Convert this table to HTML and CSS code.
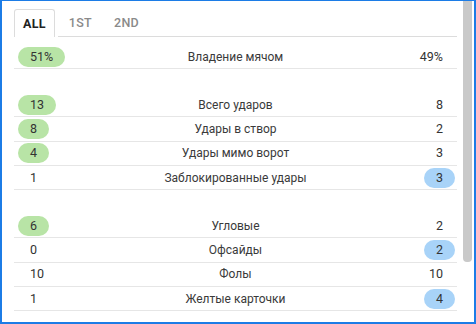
FILE: index.html
```html
<!DOCTYPE html>
<html lang="ru">
<head>
<meta charset="utf-8">
<link rel="stylesheet" href="styles.css">
</head>
<body>
<div class="frame">
  <div class="content">
    <div class="tabs">
      <div class="tab active">ALL</div>
      <div class="tab">1ST</div>
      <div class="tab">2ND</div>
      <div class="tab-line"></div>
    </div>
    <div class="group">
      <div class="row"><span class="val home pill green">51%</span><span class="label">Владение мячом</span><span class="val away">49%</span></div>
    </div>
    <div class="group">
      <div class="row"><span class="val home pill green">13</span><span class="label">Всего ударов</span><span class="val away">8</span></div>
      <div class="row"><span class="val home pill green">8</span><span class="label">Удары в створ</span><span class="val away">2</span></div>
      <div class="row"><span class="val home pill green">4</span><span class="label">Удары мимо ворот</span><span class="val away">3</span></div>
      <div class="row"><span class="val home">1</span><span class="label">Заблокированные удары</span><span class="val away pill blue">3</span></div>
    </div>
    <div class="group">
      <div class="row"><span class="val home pill green">6</span><span class="label">Угловые</span><span class="val away">2</span></div>
      <div class="row"><span class="val home">0</span><span class="label">Офсайды</span><span class="val away pill blue">2</span></div>
      <div class="row"><span class="val home">10</span><span class="label">Фолы</span><span class="val away">10</span></div>
      <div class="row"><span class="val home">1</span><span class="label">Желтые карточки</span><span class="val away pill blue">4</span></div>
    </div>
  </div>
  <div class="scrollbar"><div class="thumb"></div></div>
</div>
</body>
</html>
```
FILE: styles.css
```css
html, body {
  margin: 0;
  padding: 0;
  background: #fff;
}
body {
  font-family: Roboto, "Liberation Sans", sans-serif;
  font-size: 12px;
  color: #333;
}
.frame {
  position: relative;
  width: 476px;
  height: 324px;
  box-sizing: border-box;
  border-style: solid;
  border-color: #1c7ce6;
  border-width: 1px 2px 2px 2px;
  overflow: hidden;
}
.content {
  width: 443px;
  margin-left: 12px;
  padding-top: 8px;
}
.tabs {
  display: flex;
  align-items: stretch;
  height: 28px;
}
.tab {
  display: flex;
  align-items: center;
  padding: 0 11px;
  color: #8a8a8a;
  font-size: 12.5px;
  font-weight: 500;
  border-bottom: 1px solid #dcdcdc;
  letter-spacing: 0.3px;
}
.tab.active {
  padding: 0 8px;
  color: #222;
  font-weight: 700;
  border: 1px solid #dcdcdc;
  border-bottom: none;
  border-radius: 3px 3px 0 0;
}
.tab.active + .tab {
  margin-left: 3px;
}
.tab-line {
  flex: 1;
  border-bottom: 1px solid #dcdcdc;
}
.group {
  margin-top: 8px;
}
.group + .group {
  margin-top: 23.7px;
}
.row {
  display: grid;
  grid-template-columns: 1fr auto 1fr;
  align-items: center;
  height: 23.33px;
  border-bottom: 1px solid #e6e6e6;
}
.label {
  color: #3a3a3a;
  text-align: center;
}
.val {
  display: inline-block;
  padding: 0 12px;
  height: 20px;
  line-height: 20px;
  border-radius: 10px;
  font-size: 12.5px;
}
.home {
  justify-self: start;
  margin-left: 4px;
}
.away {
  justify-self: end;
  margin-right: 2px;
}
.green {
  background: #b8e4a6;
}
.blue {
  background: #a8d3f8;
}
.scrollbar {
  position: absolute;
  top: 0;
  right: 2px;
  width: 9px;
  height: 100%;
}
.thumb {
  height: 261px;
  background: #c9c9c9;
  border-radius: 0 0 4px 4px;
}
```
